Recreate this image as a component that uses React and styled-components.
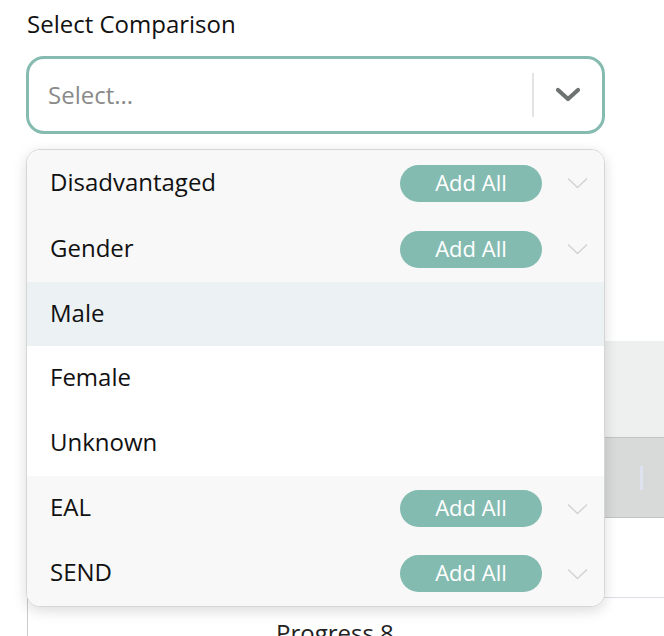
import React from "react";
import styled, { createGlobalStyle } from "styled-components";

const GlobalStyle = createGlobalStyle`
  body {
    margin: 0;
    background: #ffffff;
    font-family: "Open Sans", Lato, sans-serif;
    overflow: hidden;
  }
`;

const Page = styled.div`
  position: relative;
  width: 664px;
  height: 636px;
  overflow: hidden;
  padding: 9px 0 0 26px;
  box-sizing: border-box;
`;

const Label = styled.div`
  font-size: 24px;
  line-height: 30px;
  color: #111;
  padding-left: 1px;
`;

const SelectBox = styled.div`
  margin-top: 17px;
  width: 579px;
  height: 78px;
  box-sizing: border-box;
  border: 3px solid #85bbb1;
  border-radius: 18px;
  display: flex;
  align-items: center;
  background: #fff;
`;

const Placeholder = styled.div`
  flex: 1;
  padding-left: 19px;
  font-size: 24px;
  color: #8a8a8a;
  margin-top: -2px;
`;

const Separator = styled.span`
  width: 2px;
  height: 44px;
  background: #e4e4e4;
`;

const Indicator = styled.div`
  width: 68px;
  display: flex;
  justify-content: center;
  align-items: center;
`;

const Table = styled.div`
  margin-top: 207px;
  margin-left: 1px;
  width: 700px;
`;

const HeadBand = styled.div`
  height: 96px;
  background: #eef0ef;
`;

const DarkBand = styled.div`
  height: 79px;
  background: #d8d9d9;
  border-top: 1px solid #c2c3c3;
  border-bottom: 1px solid #c2c3c3;
  display: flex;
  align-items: center;
  padding-left: 613px;
`;

const Caret = styled.span`
  width: 3px;
  height: 24px;
  background: #dde3ee;
`;

const Spacer = styled.div`
  height: 79px;
`;

const Cell = styled.div`
  border-top: 1px solid #dcdce8;
  border-left: 1px solid #cccccc;
  height: 60px;
  padding: 20px 0 0 248px;
  box-sizing: border-box;
  font-size: 24px;
  line-height: 30px;
  color: #222;
`;

const Menu = styled.div`
  position: absolute;
  left: 26px;
  top: 149px;
  width: 579px;
  box-sizing: border-box;
  border: 1px solid #d6d6d6;
  border-radius: 14px;
  overflow: hidden;
  background: #fff;
  box-shadow: 0 4px 14px rgba(0, 0, 0, 0.14);
`;

const rowBg = { group: "#f8f8f8", active: "#ecf1f4", option: "#ffffff" };

const Row = styled.div`
  height: ${({ h }) => h}px;
  display: flex;
  align-items: center;
  padding: 0 16px 0 23px;
  background: ${({ kind }) => rowBg[kind]};
  font-size: 24px;
  color: #111;
`;

const RowText = styled.span`
  flex: 1;
  margin-top: -4px;
`;

const AddAll = styled.button`
  width: 142px;
  height: 37px;
  border: none;
  border-radius: 19px;
  background: #84bbb1;
  color: #fff;
  font-family: "Open Sans", Lato, sans-serif;
  font-size: 22px;
  padding: 0 0 3px;
  margin-right: 25px;
  cursor: pointer;
`;

const BoldChevron = () => (
  <svg width="26" height="16" viewBox="0 0 26 16">
    <path d="M3 3 L13 12 L23 3" fill="none" stroke="#6e7372" strokeWidth="4.2" strokeLinecap="round" strokeLinejoin="round" />
  </svg>
);

const ThinChevron = () => (
  <svg width="21" height="12" viewBox="0 0 21 12">
    <path d="M1 1.5 L10.5 10.5 L20 1.5" fill="none" stroke="#d2d2d2" strokeWidth="1.4" />
  </svg>
);

const items = [
  { label: "Disadvantaged", kind: "group", h: 66 },
  { label: "Gender", kind: "group", h: 66 },
  { label: "Male", kind: "active", h: 64 },
  { label: "Female", kind: "option", h: 65 },
  { label: "Unknown", kind: "option", h: 65 },
  { label: "EAL", kind: "group", h: 65 },
  { label: "SEND", kind: "group", h: 65 },
];

export default function App() {
  return (
    <>
      <GlobalStyle />
      <Page>
        <Label>Select Comparison</Label>
        <SelectBox>
          <Placeholder>Select...</Placeholder>
          <Separator />
          <Indicator>
            <BoldChevron />
          </Indicator>
        </SelectBox>

        <Table>
          <HeadBand />
          <DarkBand>
            <Caret />
          </DarkBand>
          <Spacer />
          <Cell>Progress 8</Cell>
        </Table>

        <Menu>
          {items.map((it) => (
            <Row key={it.label} kind={it.kind} h={it.h}>
              <RowText>{it.label}</RowText>
              {it.kind === "group" && (
                <>
                  <AddAll>Add All</AddAll>
                  <ThinChevron />
                </>
              )}
            </Row>
          ))}
        </Menu>
      </Page>
    </>
  );
}
